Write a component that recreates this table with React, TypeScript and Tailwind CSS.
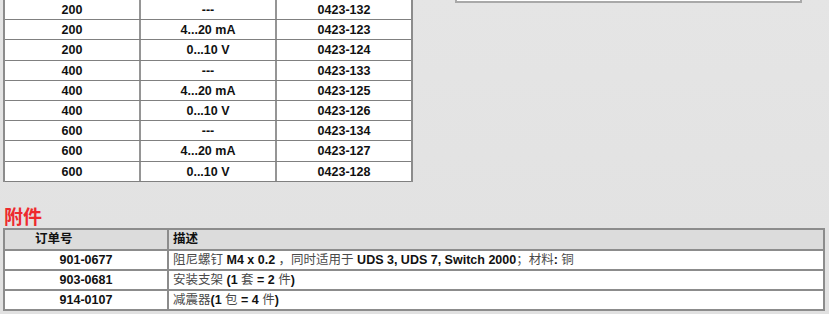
const sensors = [
  ["200", "---", "0423-132"],
  ["200", "4...20 mA", "0423-123"],
  ["200", "0...10 V", "0423-124"],
  ["400", "---", "0423-133"],
  ["400", "4...20 mA", "0423-125"],
  ["400", "0...10 V", "0423-126"],
  ["600", "---", "0423-134"],
  ["600", "4...20 mA", "0423-127"],
  ["600", "0...10 V", "0423-128"],
];

const Cjk = ({ children }: { children: React.ReactNode }) => (
  <span className="font-normal text-[#4a4a4a]">{children}</span>
);

const App = () => {
  return (
    <div
      className="w-[829px] h-[314px] overflow-hidden bg-gradient-to-b from-[#e5e5e5] to-[#e1e1e1] text-[#111]"
      style={{ fontFamily: '"Liberation Sans", Arial, "Noto Sans CJK SC", sans-serif' }}
    >
      <div className="flex items-start">
        {/* sensor table */}
        <div className="ml-[3px] -mt-[1px] w-[410px] border-x-2 border-t border-[#8c8c8c] bg-white">
          {sensors.map((r, i) => (
            <div
              key={i}
              className="grid grid-cols-[136px_136px_134px] h-[20.2px] border-b border-[#808080] text-[12.5px] font-bold leading-[17px]"
            >
              <div className="pt-[2px] text-center border-r-2 border-[#959595]">{r[0]}</div>
              <div className="pt-[2px] text-center border-r-2 border-[#959595]">{r[1]}</div>
              <div className="pt-[2px] text-center">{r[2]}</div>
            </div>
          ))}
        </div>
        <div className="ml-[42px] w-[347px] h-[3px] bg-white border-x-2 border-b-2 border-[#a9a9a9]" />
      </div>

      <div
        className="mt-[21px] ml-[4px] h-[25px] text-[19px] font-bold leading-[25px] text-[#ee2a2e]"
        style={{ fontFamily: '"Noto Sans CJK SC", sans-serif' }}
      >
        附件
      </div>

      {/* accessories table */}
      <div className="ml-[3px] w-[822px] border-x-2 border-t-2 border-[#8c8c8c] text-[12.5px] font-bold">
        <div className="grid grid-cols-[164px_1fr] h-[21px] bg-[#dcdcdc] border-b-2 border-[#8c8c8c] leading-[19px]">
          <div className="pl-[30px] border-r-2 border-[#8c8c8c]">订单号</div>
          <div className="pl-[4px]">描述</div>
        </div>
        {[
          [
            "901-0677",
            <>
              <Cjk>阻尼螺钉</Cjk> M4 x 0.2 <Cjk>，同时适用于</Cjk> UDS 3, UDS 7, Switch 2000<Cjk>；材料</Cjk>: <Cjk>铜</Cjk>
            </>,
          ],
          [
            "903-0681",
            <>
              <Cjk>安装支架</Cjk> (1 <Cjk>套</Cjk> = 2 <Cjk>件</Cjk>)
            </>,
          ],
          [
            "914-0107",
            <>
              <Cjk>减震器</Cjk>(1 <Cjk>包</Cjk> = 4 <Cjk>件</Cjk>)
            </>,
          ],
        ].map((r, i) => (
          <div
            key={i}
            className="grid grid-cols-[164px_1fr] h-[20px] bg-white border-b-2 border-[#8c8c8c] leading-[18px]"
          >
            <div className="text-center border-r-2 border-[#8c8c8c]">{r[0]}</div>
            <div className="pl-[4px] whitespace-nowrap">{r[1]}</div>
          </div>
        ))}
      </div>
    </div>
  );
};

export default App;
